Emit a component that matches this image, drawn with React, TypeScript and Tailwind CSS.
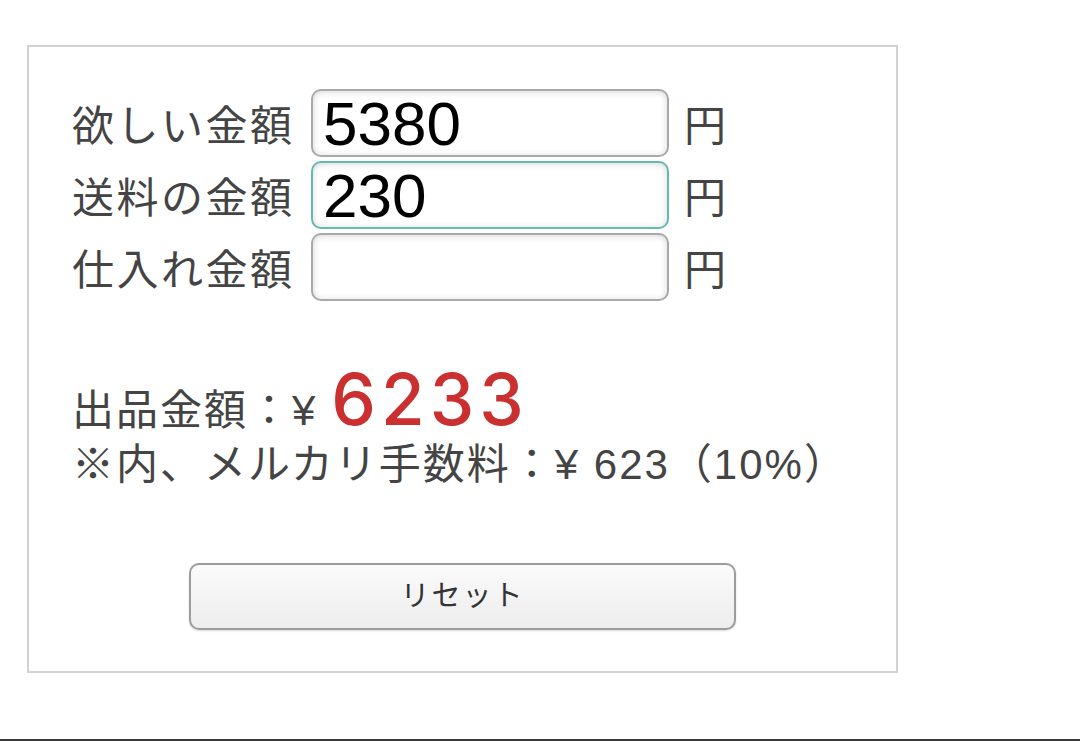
import { useState } from "react";

const fields = [
  { key: "want", label: "欲しい金額", focused: false },
  { key: "ship", label: "送料の金額", focused: true },
  { key: "cost", label: "仕入れ金額", focused: false },
];

const jp = { fontFamily: '"Liberation Sans", "Noto Sans CJK JP", sans-serif' };

export default function App() {
  const [values, setValues] = useState<Record<string, string>>({
    want: "5380",
    ship: "230",
    cost: "",
  });

  const want = Number(values.want) || 0;
  const ship = Number(values.ship) || 0;
  const price = Math.ceil((want + ship) / 0.9 - 0.5);
  const fee = Math.floor(price * 0.1);

  return (
    <div className="flex h-[741px] w-full flex-col bg-white" style={jp}>
      <div className="ml-[27px] mt-[45px] h-[628px] w-[871px] border-2 border-[#d2d2d2] px-[43px] pt-[42px]">
        <div className="flex flex-col gap-[4px]">
          {fields.map((f) => (
            <div key={f.key} className="flex items-center">
              <span className="mt-[8px] w-[239px] text-[42px] leading-none tracking-[2.5px] text-[#444]">
                {f.label}
              </span>
              <input
                value={values[f.key]}
                onChange={(e) => setValues({ ...values, [f.key]: e.target.value })}
                className={`h-[68px] w-[358px] rounded-[10px] border-2 bg-white pl-[10px] text-[62px] leading-none text-black shadow-[inset_0_1px_7px_rgba(0,0,0,0.16)] outline-none ${
                  f.focused ? "border-[#62bab1]" : "border-[#a9a9a9]"
                }`}
              />
              <span className="ml-[15px] mt-[8px] text-[42px] leading-none text-[#444]">円</span>
            </div>
          ))}
        </div>

        <div className="mt-[63px] flex items-baseline leading-none text-[#444]">
          <span className="text-[42px] leading-none tracking-[2px]">出品金額：¥</span>
          <span
            className="ml-[14px] text-[71px] font-medium leading-none tracking-[5px] text-[#c9302f]"
            style={{ fontFamily: "Inter, sans-serif" }}
          >
            {price}
          </span>
        </div>
        <div className="mt-[9px] whitespace-nowrap text-[42px] leading-none tracking-[2px] text-[#444]">
          ※内、メルカリ手数料：¥ {fee}（10%）
        </div>

        <button
          onClick={() => setValues({ want: "", ship: "", cost: "" })}
          className="mx-auto mt-[77px] flex h-[67px] w-[547px] items-center justify-center rounded-[10px] border-2 border-[#9c9c9c] bg-gradient-to-b from-[#fbfbfb] to-[#ededed] text-[29px] leading-none tracking-[2px] text-[#333] shadow-[0_1px_2px_rgba(0,0,0,0.15)]"
        >
          リセット
        </button>
      </div>
      <div className="flex-1" />
      <div className="h-[2px] w-full bg-[#3a3a3a]" />
    </div>
  );
}
